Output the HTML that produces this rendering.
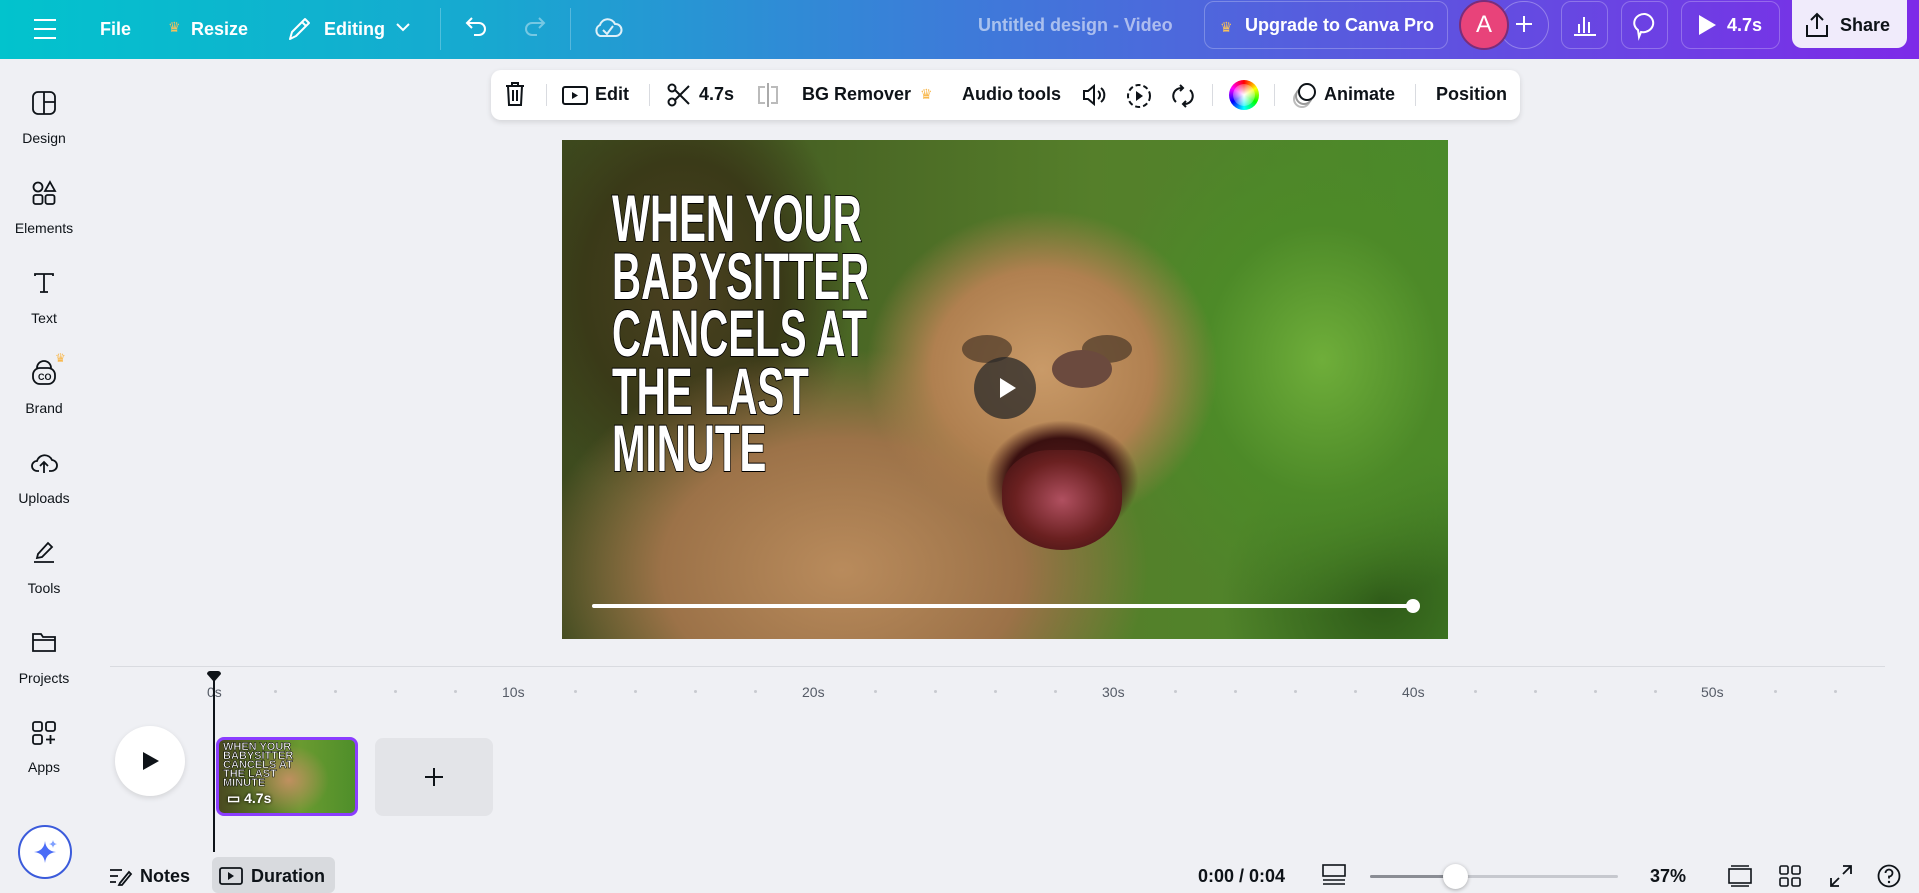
<!DOCTYPE html>
<html><head><meta charset="utf-8"><style>
*{box-sizing:border-box;margin:0;padding:0}
body{width:1919px;height:892px;overflow:hidden;background:#eff0f4;font-family:"Liberation Sans",sans-serif;position:relative;color:#0e1318}
.a{position:absolute}
.hdr{left:0;top:0;width:1919px;height:59px;background:linear-gradient(90deg,#02c3cd 0%,#17a9d0 25%,#3d7bd9 50%,#5b57df 72%,#7d2ae8 100%)}
.ht{color:#fff;font-size:18px;font-weight:bold;top:19px}
.hb{top:1px;height:48px;border:1px solid rgba(255,255,255,.25);border-radius:10px}
.tb{left:491px;top:70px;width:1029px;height:50px;background:#fff;border-radius:10px;box-shadow:0 2px 6px rgba(0,0,0,.12)}
.tt{font-size:18px;font-weight:bold;top:14px;color:#0e1318}
.sep{width:1px;height:22px;background:#d9dbe0;top:14px}
.sl{font-size:14px;color:#0e1318;width:88px;text-align:center;left:0}
.rl{font-size:14px;color:#555b66;top:684px}
.dot{width:3px;height:3px;border-radius:2px;background:#c8cad0;top:690px}
svg{overflow:visible}
.cv{left:562px;top:140px;width:886px;height:499px;overflow:hidden;
background:
radial-gradient(ellipse 90px 70px at 500px 340px,#5a1c1c 0%,#3a1010 60%,transparent 85%),
radial-gradient(ellipse 220px 200px at 480px 230px,#c99a68 0%,#b08050 50%,transparent 80%),
radial-gradient(ellipse 360px 260px at 280px 430px,#b98b5c 0%,#9c7248 50%,transparent 85%),
radial-gradient(ellipse 200px 260px at 120px 150px,#4a4020 0%,#3a3a18 50%,transparent 85%),
radial-gradient(ellipse 260px 300px at 760px 220px,#6fae3a 0%,#4d8a28 45%,transparent 85%),
radial-gradient(ellipse 200px 200px at 820px 460px,#2e5a18 0%,transparent 80%),
linear-gradient(90deg,#3d4a1e,#557f2a 60%,#4a8a2a)}
.big{left:50px;top:50px;font-family:"Liberation Sans Narrow","Liberation Sans",sans-serif;font-weight:bold;font-size:66px;line-height:57.5px;color:#fff;-webkit-text-stroke:2px #000;paint-order:stroke fill;transform:scaleX(.61);transform-origin:0 0;letter-spacing:0px;white-space:nowrap}
</style></head><body>
<div class="a hdr"></div>
<svg class="a" style="left:34px;top:17px" width="22" height="24"><g stroke="#fff" stroke-width="2"><line x1="0" y1="3" x2="22" y2="3"/><line x1="0" y1="12" x2="22" y2="12"/><line x1="0" y1="21" x2="22" y2="21"/></g></svg>
<div class="a ht" style="left:100px">File</div>
<div class="a" style="left:168px;top:19px;color:#f8c15c;font-size:14px">♛</div>
<div class="a ht" style="left:191px">Resize</div>
<svg class="a" style="left:287px;top:16px" width="24" height="26"><path d="M3 23 L5 16 L18 3 L22 7 L9 20 Z M15 6 L19 10" stroke="#fff" stroke-width="2" fill="none" stroke-linejoin="round"/></svg>
<div class="a ht" style="left:324px">Editing</div>
<svg class="a" style="left:396px;top:20px" width="14" height="14"><path d="M1 4 L7 10 L13 4" stroke="#fff" stroke-width="2" fill="none"/></svg>
<div class="a" style="left:440px;top:8px;width:1px;height:42px;background:rgba(255,255,255,.25)"></div>
<svg class="a" style="left:464px;top:14px" width="26" height="26"><path d="M8 4 L3 9 L8 14 M3 9 H15 A6 6 0 0 1 15 21 H10" stroke="#fff" stroke-width="2" fill="none"/></svg>
<svg class="a" style="left:521px;top:14px" width="26" height="26"><path d="M18 4 L23 9 L18 14 M23 9 H11 A6 6 0 0 0 11 21 H16" stroke="rgba(255,255,255,.4)" stroke-width="2" fill="none"/></svg>
<div class="a" style="left:570px;top:8px;width:1px;height:42px;background:rgba(255,255,255,.25)"></div>
<svg class="a" style="left:592px;top:12px" width="32" height="32"><path d="M8 24 A6 6 0 0 1 8 13 A8 8 0 0 1 23 12 A6 6 0 0 1 24 24 Z M11 18 L15 22 L21 14" stroke="#fff" stroke-width="2" fill="none" opacity=".85"/></svg>
<div class="a" style="left:978px;top:15px;color:rgba(255,255,255,.55);font-size:18px;font-weight:bold">Untitled design - Video</div>
<div class="a hb" style="left:1204px;width:244px"></div>
<div class="a" style="left:1220px;top:19px;color:#f8c15c;font-size:14px">♛</div>
<div class="a ht" style="left:1245px;top:15px">Upgrade to Canva Pro</div>
<div class="a" style="left:1499px;top:1px;width:50px;height:48px;border:1px solid rgba(255,255,255,.3);border-radius:25px"></div>
<svg class="a" style="left:1514px;top:14px" width="20" height="20"><path d="M10 2 V18 M2 10 H18" stroke="#fff" stroke-width="2"/></svg>
<div class="a" style="left:1459px;top:0px;width:50px;height:50px;border-radius:25px;background:#e8437a;border:2px solid #7a2d7a;color:#fff;font-size:24px;text-align:center;line-height:46px">A</div>
<div class="a hb" style="left:1561px;width:47px"></div>
<svg class="a" style="left:1572px;top:12px" width="26" height="26"><path d="M2 23 H24 M7 21 V12 M12 21 V5 M17 21 V10" stroke="#fff" stroke-width="2" fill="none"/></svg>
<div class="a hb" style="left:1621px;width:47px"></div>
<svg class="a" style="left:1632px;top:11px" width="26" height="28"><path d="M13 3 A10 9 0 1 1 9 21 L7 26 L6 19 A10 9 0 0 1 13 3 Z" stroke="#fff" stroke-width="2" fill="none"/></svg>
<div class="a hb" style="left:1681px;width:99px"></div>
<svg class="a" style="left:1697px;top:14px" width="20" height="22"><path d="M2 1 L19 11 L2 21 Z" fill="#fff"/></svg>
<div class="a ht" style="left:1727px;top:15px">4.7s</div>
<div class="a" style="left:1792px;top:0;width:115px;height:48px;background:#f0ebfb;border-radius:0 0 10px 10px"></div>
<svg class="a" style="left:1804px;top:11px" width="26" height="28"><path d="M13 18 V3 M7 9 L13 3 L19 9 M3 14 V25 H23 V14" stroke="#0e1318" stroke-width="2" fill="none"/></svg>
<div class="a ht" style="left:1840px;top:15px;color:#0e1318">Share</div>

<div class="a tb"></div>
<svg class="a" style="left:504px;top:81px" width="22" height="26"><path d="M2 5 H20 M8 5 V2 H14 V5 M4 5 L5 24 H17 L18 5 M9 9 V20 M13 9 V20" stroke="#0e1318" stroke-width="2" fill="none"/></svg>
<div class="a sep" style="left:546px;top:84px"></div>
<svg class="a" style="left:562px;top:86px" width="26" height="20"><rect x="1" y="1" width="24" height="17" rx="2" stroke="#0e1318" stroke-width="2" fill="none"/><path d="M10 6 L16 9.5 L10 13Z" fill="#0e1318"/></svg>
<div class="a tt" style="left:595px;top:84px">Edit</div>
<div class="a sep" style="left:649px;top:84px"></div>
<svg class="a" style="left:667px;top:83px" width="24" height="24"><circle cx="5" cy="5" r="3.5" stroke="#0e1318" stroke-width="2" fill="none"/><circle cx="5" cy="19" r="3.5" stroke="#0e1318" stroke-width="2" fill="none"/><path d="M8 7 L22 21 M8 17 L22 3" stroke="#0e1318" stroke-width="2"/></svg>
<div class="a tt" style="left:699px;top:84px">4.7s</div>
<svg class="a" style="left:756px;top:83px" width="24" height="24"><path d="M12 0 V24" stroke="#aaa" stroke-width="2"/><path d="M9 4 H3 V20 H9 M15 4 H21 V20 H15" stroke="#bbb" stroke-width="2" fill="none"/></svg>
<div class="a tt" style="left:802px;top:84px">BG Remover</div>
<div class="a" style="left:920px;top:86px;color:#f8b84e;font-size:14px">♛</div>
<div class="a tt" style="left:962px;top:84px">Audio tools</div>
<svg class="a" style="left:1082px;top:83px" width="24" height="24"><path d="M2 8 H6 L12 3 V21 L6 16 H2 Z M16 8 A5 5 0 0 1 16 16 M19 5 A9 9 0 0 1 19 19" stroke="#0e1318" stroke-width="2" fill="none"/></svg>
<svg class="a" style="left:1126px;top:83px" width="26" height="26"><circle cx="13" cy="13" r="11" stroke="#0e1318" stroke-width="2" fill="none" stroke-dasharray="5 3"/><path d="M10 8 L17 13 L10 18Z" fill="#0e1318"/></svg>
<svg class="a" style="left:1170px;top:83px" width="26" height="26"><path d="M6 19 A8 8 0 0 1 12 5 M20 7 A8 8 0 0 1 14 21 M10 2 L13 5 L10 8 M16 18 L13 21 L16 24" stroke="#0e1318" stroke-width="2" fill="none"/></svg>
<div class="a sep" style="left:1212px;top:84px"></div>
<div class="a" style="left:1229px;top:80px;width:30px;height:30px;border-radius:15px;background:conic-gradient(#f00,#ff0,#0f0,#0ff,#00f,#f0f,#f00)"></div>
<div class="a" style="left:1233px;top:84px;width:22px;height:22px;border-radius:11px;background:radial-gradient(#fff,rgba(255,255,255,0))"></div>
<div class="a sep" style="left:1274px;top:84px"></div>
<svg class="a" style="left:1292px;top:81px" width="28" height="28"><circle cx="10" cy="18" r="8" stroke="#bbb" stroke-width="2" fill="none"/><circle cx="12" cy="15" r="8" stroke="#999" stroke-width="2" fill="#fff"/><circle cx="15" cy="11" r="8" stroke="#0e1318" stroke-width="2" fill="#fff"/></svg>
<div class="a tt" style="left:1324px;top:84px">Animate</div>
<div class="a sep" style="left:1415px;top:84px"></div>
<div class="a tt" style="left:1436px;top:84px">Position</div>

<svg class="a" style="left:32px;top:91px" width="24" height="24"><rect x="1" y="1" width="22" height="22" rx="5" stroke="#0e1318" stroke-width="1.8" fill="none"/><path d="M12 1 V23 M12 11 H23" stroke="#0e1318" stroke-width="1.8"/></svg>
<div class="a sl" style="top:130px">Design</div>
<svg class="a" style="left:32px;top:181px" width="24" height="24"><circle cx="6" cy="6" r="4.5" stroke="#0e1318" stroke-width="1.8" fill="none"/><path d="M18 1 L23 10 H13 Z" stroke="#0e1318" stroke-width="1.8" fill="none"/><rect x="1.5" y="14" width="9" height="9" rx="2" stroke="#0e1318" stroke-width="1.8" fill="none"/><rect x="13.5" y="14" width="9" height="9" rx="2" stroke="#0e1318" stroke-width="1.8" fill="none"/></svg>
<div class="a sl" style="top:220px">Elements</div>
<svg class="a" style="left:33px;top:272px" width="22" height="22"><path d="M2 4 V2 H20 V4 M11 2 V20 M7 20 H15" stroke="#0e1318" stroke-width="1.8" fill="none"/></svg>
<div class="a sl" style="top:310px">Text</div>
<svg class="a" style="left:32px;top:360px" width="24" height="26"><rect x="1" y="8" width="22" height="16" rx="7" stroke="#0e1318" stroke-width="1.8" fill="none"/><path d="M5 8 A7 7 0 0 1 19 8" stroke="#0e1318" stroke-width="1.8" fill="none"/><text x="6" y="20" font-size="9" font-weight="bold" fill="#0e1318" font-family="Liberation Sans">CO</text></svg>
<div class="a" style="left:55px;top:351px;color:#f8b84e;font-size:12px">♛</div>
<div class="a sl" style="top:400px">Brand</div>
<svg class="a" style="left:31px;top:451px" width="26" height="24"><path d="M8 20 H6 A5 5 0 0 1 6 10 A8 8 0 0 1 21 9 A5 5 0 0 1 20 20 H18 M13 22 V12 M9 15 L13 11 L17 15" stroke="#0e1318" stroke-width="1.8" fill="none"/></svg>
<div class="a sl" style="top:490px">Uploads</div>
<svg class="a" style="left:32px;top:540px" width="24" height="24"><path d="M6 14 L16 3 L20 7 L10 17 L5 18 Z M2 22 H22" stroke="#0e1318" stroke-width="1.8" fill="none"/></svg>
<div class="a sl" style="top:580px">Tools</div>
<svg class="a" style="left:32px;top:631px" width="24" height="22"><path d="M1 3 H9 L11 6 H23 V20 H1 Z M1 9 H23" stroke="#0e1318" stroke-width="1.8" fill="none"/></svg>
<div class="a sl" style="top:670px">Projects</div>
<svg class="a" style="left:32px;top:721px" width="24" height="24"><rect x="1" y="1" width="9" height="9" rx="2" stroke="#0e1318" stroke-width="1.8" fill="none"/><rect x="14" y="1" width="9" height="9" rx="2" stroke="#0e1318" stroke-width="1.8" fill="none"/><rect x="1" y="14" width="9" height="9" rx="2" stroke="#0e1318" stroke-width="1.8" fill="none"/><path d="M18.5 14 V23 M14 18.5 H23" stroke="#0e1318" stroke-width="1.8"/></svg>
<div class="a sl" style="top:759px">Apps</div>
<div class="a" style="left:18px;top:825px;width:54px;height:54px;border-radius:27px;background:#fff;border:2px solid #3b5bdb"></div>
<svg class="a" style="left:31px;top:838px" width="28" height="28"><path d="M14 3 Q15 13 25 14 Q15 15 14 25 Q13 15 3 14 Q13 13 14 3Z" fill="#4a6cf7"/><path d="M22 2 Q22.5 5.5 26 6 Q22.5 6.5 22 10 Q21.5 6.5 18 6 Q21.5 5.5 22 2Z" fill="#7fa0ff"/></svg>

<div class="a cv">
<div class="a" style="left:400px;top:195px;width:50px;height:28px;border-radius:50%;background:#4a3828;opacity:.7"></div>
<div class="a" style="left:520px;top:195px;width:50px;height:28px;border-radius:50%;background:#4a3828;opacity:.7"></div>
<div class="a" style="left:490px;top:210px;width:60px;height:38px;border-radius:50%;background:#6b4a3e"></div>
<div class="a" style="left:440px;top:310px;width:120px;height:100px;border-radius:40% 40% 50% 50%;background:radial-gradient(#b05060 0%,#6a2020 55%,#3a1010 100%)"></div>
<div class="a big">WHEN YOUR<br>BABYSITTER<br>CANCELS AT<br>THE LAST<br>MINUTE</div>
<div class="a" style="left:412px;top:217px;width:62px;height:62px;border-radius:31px;background:rgba(40,40,40,.75)"></div>
<svg class="a" style="left:436px;top:236px" width="20" height="24"><path d="M2 2 L18 12 L2 22 Z" fill="#fff"/></svg>
<div class="a" style="left:30px;top:464px;width:824px;height:4px;background:#fff;border-radius:2px"></div>
<div class="a" style="left:844px;top:459px;width:14px;height:14px;background:#fff;border-radius:7px"></div>
</div>

<div class="a" style="left:110px;top:666px;width:1775px;height:1px;background:#d9dbe0"></div>
<div class="a rl" style="left:207px">0s</div>
<div class="a rl" style="left:502px">10s</div>
<div class="a rl" style="left:802px">20s</div>
<div class="a rl" style="left:1102px">30s</div>
<div class="a rl" style="left:1402px">40s</div>
<div class="a rl" style="left:1701px">50s</div>
<div class="a dot" style="left:274px"></div><div class="a dot" style="left:334px"></div><div class="a dot" style="left:394px"></div><div class="a dot" style="left:454px"></div>
<div class="a dot" style="left:574px"></div><div class="a dot" style="left:634px"></div><div class="a dot" style="left:694px"></div><div class="a dot" style="left:754px"></div>
<div class="a dot" style="left:874px"></div><div class="a dot" style="left:934px"></div><div class="a dot" style="left:994px"></div><div class="a dot" style="left:1054px"></div>
<div class="a dot" style="left:1174px"></div><div class="a dot" style="left:1234px"></div><div class="a dot" style="left:1294px"></div><div class="a dot" style="left:1354px"></div>
<div class="a dot" style="left:1474px"></div><div class="a dot" style="left:1534px"></div><div class="a dot" style="left:1594px"></div><div class="a dot" style="left:1654px"></div>
<div class="a dot" style="left:1774px"></div><div class="a dot" style="left:1834px"></div>
<div class="a" style="left:115px;top:726px;width:70px;height:70px;border-radius:35px;background:#fff;box-shadow:0 2px 6px rgba(0,0,0,.12)"></div>
<svg class="a" style="left:142px;top:751px" width="18" height="20"><path d="M1 1 L17 10 L1 19Z" fill="#0e1318"/></svg>
<div class="a" style="left:216px;top:737px;width:142px;height:79px;border:3px solid #8b3dff;border-radius:8px;overflow:hidden;background:radial-gradient(ellipse 40px 35px at 70px 40px,#c09060,transparent),linear-gradient(90deg,#4a4a20,#6a9a30 60%,#4f8f2a)">
<div style="position:absolute;left:4px;top:3px;font-family:'Liberation Sans Narrow',sans-serif;font-weight:bold;font-size:11px;line-height:9px;color:#fff;-webkit-text-stroke:.5px #000">WHEN YOUR<br>BABYSITTER<br>CANCELS AT<br>THE LAST<br>MINUTE</div>
<div style="position:absolute;left:8px;top:50px;color:#fff;font-size:14px;font-weight:bold;text-shadow:0 0 3px #000">▭ 4.7s</div>
</div>
<div class="a" style="left:375px;top:738px;width:118px;height:78px;border-radius:8px;background:#e3e4e8"></div>
<svg class="a" style="left:424px;top:767px" width="20" height="20"><path d="M10 1 V19 M1 10 H19" stroke="#0e1318" stroke-width="2"/></svg>
<div class="a" style="left:213px;top:676px;width:2px;height:176px;background:#0e1318"></div>
<svg class="a" style="left:206px;top:671px" width="16" height="12"><path d="M1 3 A3 3 0 0 1 4 0 H12 A3 3 0 0 1 15 3 L8 11 Z" fill="#0e1318"/></svg>

<svg class="a" style="left:109px;top:866px" width="22" height="20"><path d="M1 4 H13 M1 10 H9 M1 16 H7 M11 17 L20 6 L22 8 L13 19 L10 19Z" stroke="#0e1318" stroke-width="1.8" fill="none"/></svg>
<div class="a" style="left:140px;top:866px;font-size:18px;font-weight:bold">Notes</div>
<div class="a" style="left:212px;top:857px;width:123px;height:36px;background:#d8dade;border-radius:6px"></div>
<svg class="a" style="left:219px;top:867px" width="24" height="18"><rect x="1" y="1" width="22" height="16" rx="2" stroke="#0e1318" stroke-width="1.8" fill="none"/><path d="M9 5 L15 9 L9 13Z" fill="#0e1318"/></svg>
<div class="a" style="left:251px;top:866px;font-size:18px;font-weight:bold">Duration</div>
<div class="a" style="left:1198px;top:866px;font-size:18px;font-weight:bold">0:00 / 0:04</div>
<svg class="a" style="left:1322px;top:864px" width="24" height="22"><rect x="1" y="1" width="22" height="11" stroke="#0e1318" stroke-width="1.6" fill="none"/><path d="M1 16 H23 M1 20 H23" stroke="#0e1318" stroke-width="1.6"/></svg>
<div class="a" style="left:1370px;top:875px;width:248px;height:3px;background:#c6c8ce;border-radius:2px"></div>
<div class="a" style="left:1370px;top:875px;width:85px;height:3px;background:#8a8d94;border-radius:2px"></div>
<div class="a" style="left:1443px;top:864px;width:25px;height:25px;border-radius:13px;background:#fff;box-shadow:0 1px 4px rgba(0,0,0,.3)"></div>
<div class="a" style="left:1650px;top:866px;font-size:18px;font-weight:bold">37%</div>
<svg class="a" style="left:1728px;top:865px" width="24" height="22"><rect x="1" y="4" width="22" height="14" stroke="#0e1318" stroke-width="1.6" fill="none"/><path d="M3 1 H21 M3 21 H21" stroke="#0e1318" stroke-width="1.6"/></svg>
<svg class="a" style="left:1779px;top:865px" width="22" height="22"><rect x="1" y="1" width="8" height="8" rx="1.5" stroke="#0e1318" stroke-width="1.6" fill="none"/><rect x="13" y="1" width="8" height="8" rx="1.5" stroke="#0e1318" stroke-width="1.6" fill="none"/><rect x="1" y="13" width="8" height="8" rx="1.5" stroke="#0e1318" stroke-width="1.6" fill="none"/><rect x="13" y="13" width="8" height="8" rx="1.5" stroke="#0e1318" stroke-width="1.6" fill="none"/></svg>
<svg class="a" style="left:1830px;top:865px" width="22" height="22"><path d="M13 1 H21 V9 M21 1 L13 9 M9 21 H1 V13 M1 21 L9 13" stroke="#0e1318" stroke-width="1.8" fill="none"/></svg>
<svg class="a" style="left:1877px;top:864px" width="24" height="24"><circle cx="12" cy="12" r="10.5" stroke="#0e1318" stroke-width="1.8" fill="none"/><path d="M8.5 9 A3.5 3.5 0 1 1 12 12.5 V14.5" stroke="#0e1318" stroke-width="1.8" fill="none"/><circle cx="12" cy="18" r="1.2" fill="#0e1318"/></svg>
</body></html>
